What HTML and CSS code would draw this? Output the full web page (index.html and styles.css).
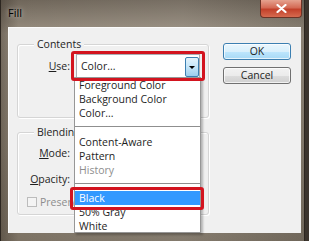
FILE: index.html
```html
<!DOCTYPE html>
<html lang="en">

<head>
    <meta charset="UTF-8">
    <meta name="viewport" content="width=device-width, initial-scale=1.0">
    <title>Fill</title>
    <link rel="stylesheet" href="styles.css">
</head>

<body>

    <div class="window">
        <div class="titlebar">
            <span class="title">Fill</span>
            <span class="close">
                <svg width="11" height="9" viewBox="0 0 11 9">
                    <path d="M1.5 1 L9.5 8 M9.5 1 L1.5 8" stroke="#fff" stroke-width="2.2" stroke-linecap="round" />
                </svg>
            </span>
        </div>

        <div class="client">
            <div class="groups">
                <!-- Contents -->
                <div class="group contents">
                    <span class="legend">Contents</span>
                    <div class="row use">
                        <label class="lbl"><u>U</u>se:</label>
                        <div class="combo">
                            <span class="comboText">Color...</span>
                            <span class="arrow"><i></i></span>
                        </div>
                    </div>
                </div>

                <!-- Blending -->
                <div class="group blending">
                    <span class="legend">Blending</span>
                    <div class="row"><label class="lbl"><u>M</u>ode:</label></div>
                    <div class="row"><label class="lbl"><u>O</u>pacity:</label></div>
                    <div class="check"><span class="box"></span>Preserve Transparency</div>
                </div>
            </div>

            <div class="buttons">
                <button class="btn default">OK</button>
                <button class="btn">Cancel</button>
            </div>

            <!-- lista desplegada del combo -->
            <ul class="droplist">
                <li>Foreground Color</li>
                <li>Background Color</li>
                <li>Color...</li>
                <li class="sep"></li>
                <li>Content-Aware</li>
                <li>Pattern</li>
                <li class="disabled">History</li>
                <li class="sep second"></li>
                <li class="selected">Black</li>
                <li>50% Gray</li>
                <li>White</li>
            </ul>

            <!-- marcas rojas de la captura -->
            <div class="mark markCombo"></div>
            <div class="mark markBlack"></div>
        </div>
    </div>

</body>

</html>
```

FILE: styles.css
```css
body {
    margin: 0;
    background-color: #3b342d;
    font-family: "Open Sans", sans-serif;
    font-size: 10.5px;
    color: #1e1e1e;
}

.window {
    width: 305px;
    height: 241px;
    display: flex;
    flex-direction: column;
    background: linear-gradient(90deg, rgba(40, 32, 24, 0.35) 0%, rgba(0, 0, 0, 0) 6%, rgba(255, 255, 255, 0.06) 60%, rgba(0, 0, 0, 0.1) 100%),
        linear-gradient(180deg, #6f665a 0%, #9a9082 14%, #8e8475 60%, #7c7264 100%);
    box-shadow: inset 1px 0 #2c2620, inset -1px 0 #2c2620;
}

.titlebar {
    height: 27px;
    display: flex;
    align-items: flex-start;
    padding-left: 8px;
}

.title {
    margin-top: 5px;
    font-size: 11px;
    line-height: 16px;
    color: #000;
    text-shadow: 0 0 5px rgba(255, 255, 255, 0.7);
}

.close {
    margin-left: auto;
    margin-right: 3px;
    width: 42px;
    height: 18px;
    box-sizing: border-box;
    display: flex;
    align-items: center;
    justify-content: center;
    background: linear-gradient(180deg, #e5a28f 0%, #d46a55 45%, #c2402a 55%, #d66a4f 100%);
    border: 1px solid #6b3326;
    border-top: none;
    border-radius: 0 0 4px 4px;
}

.client {
    position: relative;
    margin: 0 4px 0 8px;
    height: 206px;
    background-color: #f0f0f0;
    box-shadow: inset 1px 1px #fbfbfb;
    display: flex;
    align-items: flex-start;
}

.groups {
    margin: 17px 0 0 9px;
    width: 192px;
}

.group {
    border: 1px solid #d5d5d5;
    border-radius: 3px;
    box-shadow: inset 1px 1px #fff, 1px 1px #fff;
    box-sizing: border-box;
}

.contents {
    height: 74px;
}

.blending {
    height: 83px;
    margin-top: 14px;
}

.legend {
    display: block;
    width: max-content;
    margin: -8px 0 0 16px;
    padding: 0 3px;
    line-height: 14px;
    background-color: #f0f0f0;
}

.row {
    display: flex;
    align-items: center;
    height: 24px;
    margin-top: 2px;
}

.use {
    margin-top: 3px;
}

.lbl {
    width: 52px;
    margin-right: 6px;
    text-align: right;
}

.combo {
    width: 124px;
    height: 24px;
    box-sizing: border-box;
    display: flex;
    align-items: center;
    background-color: #fff;
    border: 1px solid #abadb3;
    padding-left: 4px;
}

.arrow {
    margin: 2px 0 0 auto;
    width: 14px;
    height: 20px;
    box-sizing: border-box;
    display: flex;
    align-items: center;
    justify-content: center;
    background: linear-gradient(180deg, #e4f3fc 0%, #c4e5f8 50%, #9ccdec 100%);
    border: 1px solid #3c7fb1;
    border-radius: 2px;
}

.arrow i {
    width: 0;
    height: 0;
    border-left: 3px solid transparent;
    border-right: 3px solid transparent;
    border-top: 3px solid #000;
}

.check {
    display: flex;
    align-items: center;
    margin: 4px 0 0 9px;
    color: #8d8d8d;
    line-height: 14px;
}

.box {
    width: 10px;
    height: 10px;
    box-sizing: border-box;
    border: 1px solid #bcbcbc;
    background-color: #f4f4f4;
    margin-right: 3px;
}

.buttons {
    margin: 16px 0 0 14px;
    display: flex;
    flex-direction: column;
    gap: 7px;
}

.btn {
    width: 68px;
    height: 17px;
    padding: 0;
    font-family: inherit;
    font-size: 10.5px;
    line-height: 15px;
    color: #1e1e1e;
    border: 1px solid #707070;
    border-radius: 3px;
    background: linear-gradient(180deg, #f2f2f2 0%, #ebebeb 50%, #dddddd 51%, #cfcfcf 100%);
    box-shadow: inset 0 0 0 1px rgba(255, 255, 255, 0.7);
}

.btn.default {
    border-color: #3c7fb1;
    background: linear-gradient(180deg, #eaf6fd 0%, #d9f0fc 50%, #bee6fd 51%, #a7d9f5 100%);
}

.droplist {
    position: absolute;
    left: 66px;
    top: 50px;
    width: 127px;
    height: 156px;
    box-sizing: border-box;
    margin: 0;
    padding: 0;
    list-style: none;
    background-color: #fff;
    border: 1px solid #979797;
    box-shadow: 2px 2px 2px rgba(0, 0, 0, 0.25);
}

.droplist li {
    height: 14px;
    line-height: 14px;
    padding-left: 4px;
    white-space: nowrap;
}

.droplist .sep {
    height: 1px;
    padding: 0;
    margin: 6px 0 8px;
    background-color: #8f8f8f;
}

.droplist .sep.second {
    margin: 6px 0 7px;
}

.droplist .disabled {
    color: #8d8d8d;
}

.droplist .selected {
    background-color: #3399ff;
    color: #fff;
}

.mark {
    position: absolute;
    box-sizing: border-box;
    border: 3px solid #d3141f;
    border-radius: 3px;
}

.markCombo {
    left: 63px;
    top: 24px;
    width: 134px;
    height: 30px;
}

.markBlack {
    left: 62px;
    top: 160px;
    width: 134px;
    height: 23px;
}
```
